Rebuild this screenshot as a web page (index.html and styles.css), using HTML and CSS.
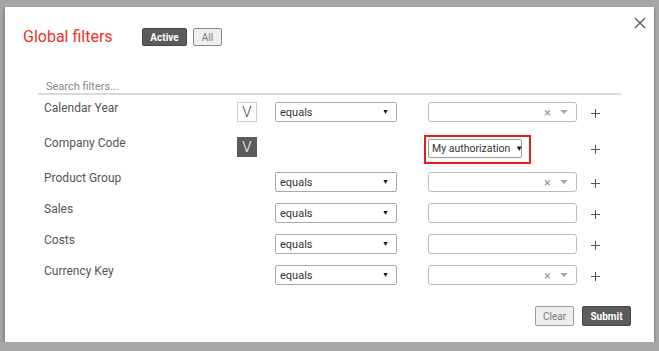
FILE: index.html
```html
<!DOCTYPE html>
<html lang="en">
<head>
  <meta charset="UTF-8">
  <title>Global filters</title>
  <link rel="stylesheet" href="styles.css">
</head>
<body>
  <div class="dialog">
    <header class="head">
      <h2 class="title">Global filters</h2>
      <div class="toggle">
        <button class="tbtn on">Active</button>
        <button class="tbtn">All</button>
      </div>
      <button class="close" aria-label="Close">
        <svg width="12" height="12" viewBox="0 0 12 12"><path d="M1 1L11 11M11 1L1 11" stroke="#555" stroke-width="1.3" fill="none"/></svg>
      </button>
    </header>

    <div class="search">
      <input type="text" placeholder="Search filters...">
    </div>

    <div class="rows">
      <div class="row tall">
        <div class="label">Calendar Year</div>
        <div class="chk"><span class="box">V</span></div>
        <div class="op"><div class="sel">equals<span class="arr">&#9660;</span></div></div>
        <div class="val"><div class="combo"><span class="x">&#215;</span><span class="dd"></span></div></div>
        <div class="add"><svg width="9" height="9" viewBox="0 0 9 9"><path d="M4.5 0V9M0 4.5H9" stroke="#555" stroke-width="1"/></svg></div>
      </div>
      <div class="row tall">
        <div class="label">Company Code</div>
        <div class="chk"><span class="box dark">V</span></div>
        <div class="op"></div>
        <div class="val"><div class="mark"><div class="sel auth">My authorization<span class="arr">&#9660;</span></div></div></div>
        <div class="add low"><svg width="9" height="9" viewBox="0 0 9 9"><path d="M4.5 0V9M0 4.5H9" stroke="#555" stroke-width="1"/></svg></div>
      </div>
      <div class="row">
        <div class="label">Product Group</div>
        <div class="chk"></div>
        <div class="op"><div class="sel">equals<span class="arr">&#9660;</span></div></div>
        <div class="val"><div class="combo"><span class="x">&#215;</span><span class="dd"></span></div></div>
        <div class="add"><svg width="9" height="9" viewBox="0 0 9 9"><path d="M4.5 0V9M0 4.5H9" stroke="#555" stroke-width="1"/></svg></div>
      </div>
      <div class="row">
        <div class="label">Sales</div>
        <div class="chk"></div>
        <div class="op"><div class="sel">equals<span class="arr">&#9660;</span></div></div>
        <div class="val"><div class="combo"></div></div>
        <div class="add"><svg width="9" height="9" viewBox="0 0 9 9"><path d="M4.5 0V9M0 4.5H9" stroke="#555" stroke-width="1"/></svg></div>
      </div>
      <div class="row">
        <div class="label">Costs</div>
        <div class="chk"></div>
        <div class="op"><div class="sel">equals<span class="arr">&#9660;</span></div></div>
        <div class="val"><div class="combo"></div></div>
        <div class="add"><svg width="9" height="9" viewBox="0 0 9 9"><path d="M4.5 0V9M0 4.5H9" stroke="#555" stroke-width="1"/></svg></div>
      </div>
      <div class="row">
        <div class="label">Currency Key</div>
        <div class="chk"></div>
        <div class="op"><div class="sel">equals<span class="arr">&#9660;</span></div></div>
        <div class="val"><div class="combo"><span class="x">&#215;</span><span class="dd"></span></div></div>
        <div class="add"><svg width="9" height="9" viewBox="0 0 9 9"><path d="M4.5 0V9M0 4.5H9" stroke="#555" stroke-width="1"/></svg></div>
      </div>
    </div>

    <footer class="foot">
      <button class="fbtn clear">Clear</button>
      <button class="fbtn submit">Submit</button>
    </footer>
  </div>
</body>
</html>
```
FILE: styles.css
```css
body { margin: 0; background: #a6a6a6; font-family: Roboto, "Liberation Sans", sans-serif; }
.dialog { box-sizing: border-box; width: 650px; height: 335px; margin: 7px 0 0 4px; background: #fff; border-left: 1px solid #8c8c8c; box-shadow: 0 2px 3px rgba(0,0,0,0.35); }

.head { display: flex; align-items: flex-start; padding: 21px 0 0 18px; height: 18px; }
.title { margin: 0; width: 119px; font-size: 16px; line-height: 18px; font-weight: 400; color: #ee3124; }
.toggle { display: flex; gap: 6px; }
.tbtn { box-sizing: border-box; height: 18px; padding: 0; font-family: inherit; font-size: 10px; border-radius: 2px; }
.tbtn.on { width: 45px; background: #5b5b5b; border: 1px solid #444; color: #fff; font-weight: 700; }
.tbtn:not(.on) { width: 29px; background: #efefef; border: 1px solid #888; color: #777; }
.close { margin: -11px 0 0 auto; margin-right: 8px; padding: 0; border: none; background: none; width: 12px; height: 12px; display: block; }
.close svg { display: block; }

.search { margin: 26px 0 0 33px; width: 583px; border-bottom: 2px solid #d9d9d9; }
.search input { display: block; box-sizing: border-box; width: 100%; height: 21px; border: none; outline: none; padding: 8px 0 0 8px; font-family: inherit; font-size: 11px; color: #333; }
.search input::placeholder { color: #888; }

.rows { margin-top: 7px; padding-left: 39px; }
.row { display: flex; align-items: flex-start; height: 31px; }
.row.tall { height: 35px; }
.label { width: 193px; padding-top: 0; font-size: 12px; line-height: 13px; color: #555; }
.chk { width: 38px; }
.box { box-sizing: border-box; display: flex; align-items: center; justify-content: center; width: 20px; height: 20px; border: 1px solid #ccc; background: #fff; color: #444; font-size: 15px; font-family: Roboto, sans-serif; font-weight: 300; }
.box.dark { background: #5b5b5b; border-color: #5b5b5b; color: #fff; }
.op { width: 153px; }
.sel { box-sizing: border-box; display: flex; align-items: center; justify-content: space-between; width: 122px; height: 20px; padding: 0 7px 0 4px; border: 1px solid #a9a9a9; border-radius: 2px; font-size: 11px; color: #333; white-space: nowrap; }
.arr { font-size: 7px; color: #111; }
.val { width: 163px; }
.combo { box-sizing: border-box; display: flex; align-items: center; justify-content: flex-end; width: 149px; height: 20px; padding-right: 8px; border: 1px solid #bbb; border-radius: 3px; }
.x { font-size: 13px; color: #999; margin-right: 9px; line-height: 1; }
.dd { width: 0; height: 0; border-left: 4px solid transparent; border-right: 4px solid transparent; border-top: 4px solid #aaa; }
.mark { display: inline-block; margin: -4px 0 0 -4px; padding: 2px 7px 4px 2px; border: 2px solid #e31e1e; }
.sel.auth { width: 94px; height: 19px; justify-content: flex-start; gap: 5px; padding: 0 3px; border-color: #999; font-size: 10.5px; }
.sel.auth .arr { font-size: 8px; }
.add { padding-top: 7px; }
.add.low { padding-top: 8px; }
.add svg { display: block; }

.foot { display: flex; justify-content: flex-end; gap: 8px; margin-top: 10px; padding-right: 23px; }
.fbtn { box-sizing: border-box; height: 20px; padding: 0; font-family: inherit; font-size: 10px; border-radius: 2px; }
.clear { width: 39px; background: #efefef; border: 1px solid #999; color: #777; }
.submit { width: 49px; background: #5b5b5b; border: 1px solid #444; color: #fff; font-weight: 700; }
```
